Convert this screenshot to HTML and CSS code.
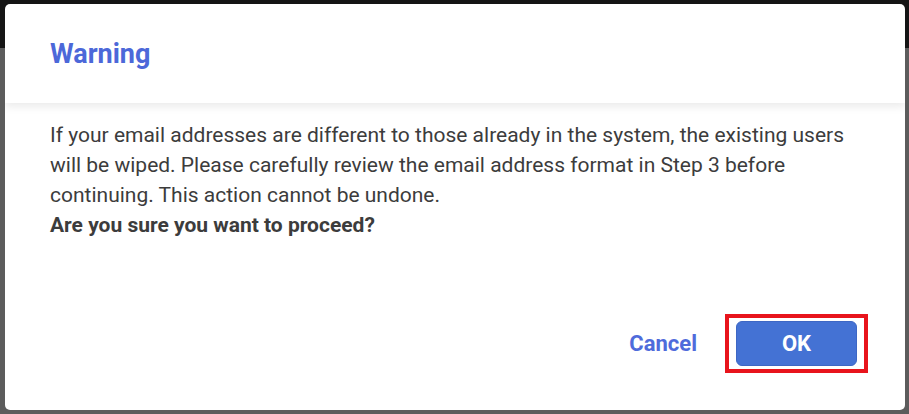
FILE: index.html
```html
<!DOCTYPE html>
<html>
<head>
<meta charset="utf-8">
<link rel="stylesheet" href="styles.css">
</head>
<body>
<div class="page">
  <div class="dialog">
    <div class="dialog-header">
      <h2 class="dialog-title">Warning</h2>
    </div>
    <div class="dialog-body">
      <p class="message">If your email addresses are different to those already in the system, the existing users will be wiped. Please carefully review the email address format in Step 3 before continuing. This action cannot be undone.<br><strong>Are you sure you want to proceed?</strong></p>
    </div>
    <div class="dialog-footer">
      <button class="btn-cancel">Cancel</button>
      <div class="highlight">
        <button class="btn-ok">OK</button>
      </div>
    </div>
  </div>
</div>
</body>
</html>
```
FILE: styles.css
```css
* { box-sizing: border-box; }
html, body {
  margin: 0;
  padding: 0;
  width: 909px;
  height: 414px;
  overflow: hidden;
}
body {
  background: linear-gradient(#151515 0, #151515 48px, #5c5c5c 48px);
  font-family: Roboto, "Liberation Sans", sans-serif;
}
.page {
  padding: 4px 4px 4px 5px;
  height: 414px;
}
.dialog {
  width: 900px;
  height: 406px;
  background: #fff;
  border-radius: 5px;
  display: flex;
  flex-direction: column;
  overflow: hidden;
}
.dialog-header {
  height: 99px;
  padding: 0 45px;
  display: flex;
  align-items: center;
  box-shadow: 0 4px 8px rgba(0,0,0,0.08);
  position: relative;
  z-index: 1;
}
.dialog-title {
  margin: 0;
  font-size: 27px;
  font-weight: 700;
  color: #4c68d9;
}
.dialog-body {
  padding: 17px 45px 0 45px;
  flex: 1;
}
.message {
  margin: 0;
  font-size: 21px;
  line-height: 30px;
  color: #3c3c3c;
}
.message strong {
  font-weight: 700;
}
.dialog-footer {
  display: flex;
  justify-content: flex-end;
  align-items: center;
  padding: 0 37px 37px 0;
  gap: 28px;
}
.btn-cancel {
  background: none;
  border: 0;
  padding: 0;
  font-family: inherit;
  font-size: 22px;
  font-weight: 700;
  color: #4f6bdb;
  cursor: pointer;
}
.highlight {
  border: 4px solid #e8141c;
  padding: 3px 7px;
}
.btn-ok {
  display: block;
  width: 121px;
  height: 45px;
  background: #4472d4;
  border: 1px solid #3d67c4;
  border-radius: 6px;
  color: #fff;
  font-family: inherit;
  font-size: 22px;
  font-weight: 700;
  cursor: pointer;
}
```
